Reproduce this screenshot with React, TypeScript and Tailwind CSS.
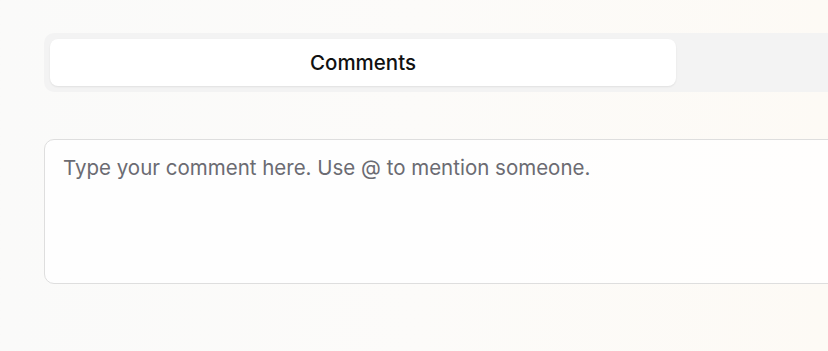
export default function App() {
  return (
    <div
      className="w-[828px] h-[351px] overflow-hidden bg-gradient-to-r from-[#fafaf9] via-[#fcfbf9] to-[#fdfaf5] pl-[44px] pt-[33px]"
      style={{ fontFamily: "Inter, 'Noto Sans', sans-serif" }}
    >
      <div className="w-[1264px] h-[59px] rounded-[10px] bg-[#f3f3f3] p-[6px] flex">
        <button className="w-[626px] h-[47px] pt-[2px] rounded-[8px] bg-white shadow-[0_1px_2px_rgba(0,0,0,0.08)] text-[20.5px] font-medium text-[#111111]">
          Comments
        </button>
        <button className="w-[626px] h-[47px] rounded-[8px] text-[20px] font-medium text-[#6b7280]"></button>
      </div>
      <textarea
        className="mt-[47px] block w-[1264px] h-[145px] resize-none rounded-[10px] border border-[#dedede] bg-white/80 px-[18px] py-[14px] text-[20.5px] leading-[28px] text-[#111] placeholder:text-[#6b6b72] outline-none"
        placeholder="Type your comment here. Use @ to mention someone."
      />
    </div>
  );
}
